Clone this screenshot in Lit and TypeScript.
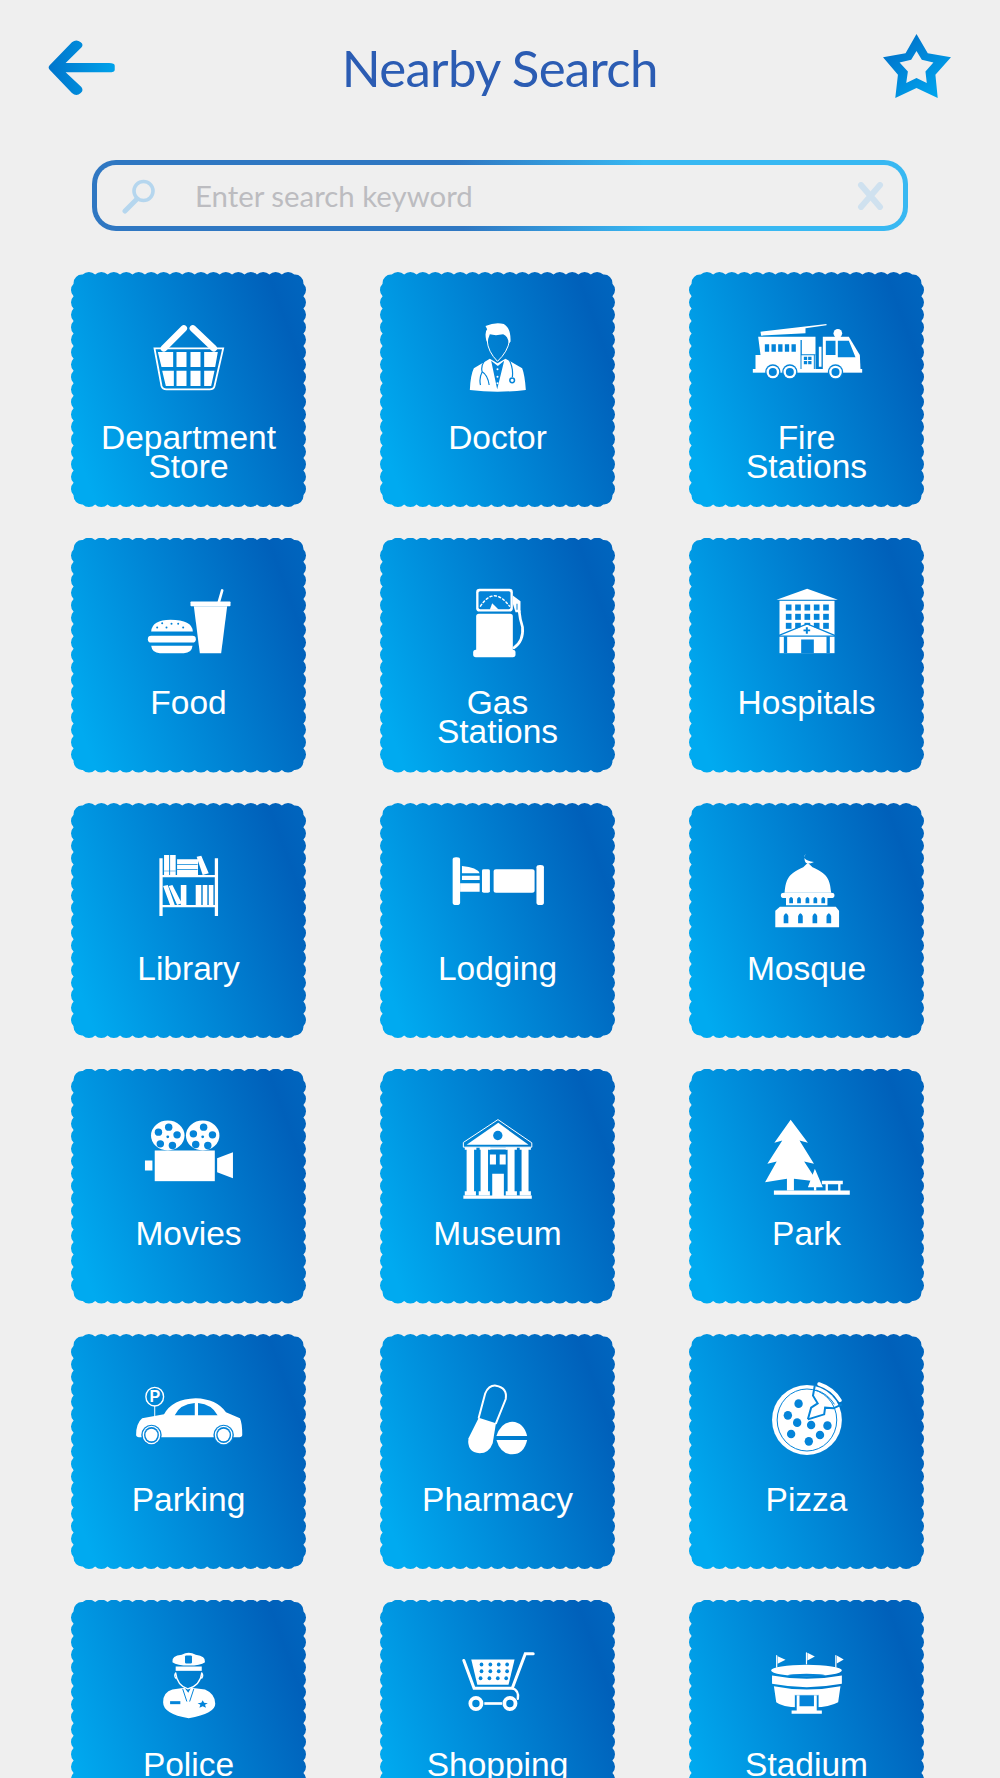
import { LitElement, css, html, svg, unsafeCSS } from "lit";
import { customElement } from "lit/decorators.js";

// scalloped edge of a 235px tile
function scallopPath() {
  const S = 235, d = 2.6, c = 11.7, n = 17;
  const step = (S - 2 * c) / n;
  const r = 8.74, rc = 8.5;
  let p = `M${c} ${d}`;
  for (let i = 1; i <= n; i++) p += ` A${r} ${r} 0 0 1 ${(c + i * step).toFixed(2)} ${d}`;
  p += ` A${rc} ${rc} 0 0 1 ${S - d} ${c}`;
  for (let i = 1; i <= n; i++) p += ` A${r} ${r} 0 0 1 ${S - d} ${(c + i * step).toFixed(2)}`;
  p += ` A${rc} ${rc} 0 0 1 ${S - c} ${S - d}`;
  for (let i = 1; i <= n; i++) p += ` A${r} ${r} 0 0 1 ${(S - c - i * step).toFixed(2)} ${S - d}`;
  p += ` A${rc} ${rc} 0 0 1 ${d} ${S - c}`;
  for (let i = 1; i <= n; i++) p += ` A${r} ${r} 0 0 1 ${d} ${(S - c - i * step).toFixed(2)}`;
  p += ` A${rc} ${rc} 0 0 1 ${c} ${d} Z`;
  return p;
}

const W3 = "390 228";
const W2 = "279.2 228";

const basket = svg`
  <path class="s" stroke-width="6.5" d="M370 205L310 265M397 205L460 265"/>
  <path class="s" stroke-width="1.8" d="M282 265H488L462 378Q460 388 448 388H318Q306 388 303 378Z"/>
  <path class="f" d="M292 276H338V321H303ZM348 276H378V321H348ZM390 276H420V321H390ZM431 276H472L464 321H431ZM305 332H340V378H316ZM348 332H378V378H348ZM390 332H420V378H390ZM431 332H462L452 378H431Z"/>`;

const doctor = svg`
  <path class="f" d="M345 78Q375 65 400 72Q422 85 420 125L415 130Q412 108 398 103Q375 108 358 103Q352 115 352 130L347 120Q342 95 350 88Z"/>
  <path class="s" stroke-width="1" d="M350 122Q352 155 381 184Q412 155 417 122"/>
  <path class="f" d="M298 270Q300 225 310 205L358 176L381 190L405 176L455 205Q463 225 466 270Q380 280 298 270Z"/>
  <path class="h" d="M362 182L380 268L401 182L382 198Z"/>
  <circle class="f" cx="381" cy="208" r="3"/><circle class="f" cx="381" cy="230" r="3"/><circle class="f" cx="381" cy="250" r="3"/>
  <path class="hs" stroke-width="1.2" d="M343 180Q330 200 335 215Q325 235 330 255M335 215Q352 225 356 255M415 178Q430 205 425 235"/>
  <circle class="f" cx="425" cy="241" r="10"/><circle class="hs" cx="425" cy="241" r="7" stroke-width="1.5"/>`;

const fire = svg`
  <path class="f" d="M120 95L318 72V76L255 85V100L122 107Z"/>
  <path class="f" d="M113 110H285V208H105V165H120Z"/>
  <path class="h" d="M133 133h13v22h-13zM153 133h13v22h-13zM173 133h13v22h-13zM193 133h13v22h-13zM213 133h13v22h-13z"/>
  <path class="h" d="M240 120h4v45h-4zM240 163h45v3h-45zM240 165h3v45h-3zM280 165h3v45h-3z"/>
  <path class="h" d="M250 170h10v10h-10zM263 170h10v10h-10zM250 183h10v10h-10zM263 183h10v10h-10z"/>
  <path class="f" d="M295 140h8v60h-8z"/>
  <circle class="f" cx="352" cy="100" r="13"/>
  <path class="f" d="M307 110H385L418 165L420 208H307Z"/>
  <path class="h" d="M316 122H345V165H316ZM352 122H385L405 172H352Z"/>
  <rect class="f" x="97" y="207" width="328" height="11"/>
  ${[157, 208, 345].map((x) => svg`<circle class="h" cx=${x} cy="216" r="23"/><circle class="f" cx=${x} cy="216" r="19"/><circle class="h" cx=${x} cy="216" r="12"/>`)}`;

const food = svg`
  <rect class="f" x="210" y="93" width="120" height="14" rx="2"/>
  <path class="f" d="M220 107H320L302 248H238Z"/>
  <path class="s" stroke-width="2.7" d="M305 60L295 95"/>
  <path class="f" d="M92 183Q95 148 150 148Q215 148 217 183Z"/>
  ${[[125, 158], [153, 160], [173, 160], [110, 171], [138, 171], [188, 171]].map(([x, y]) => svg`<circle class="h" cx=${x} cy=${y} r="3"/>`)}
  <rect class="f" x="82" y="196" width="144" height="20" rx="10"/>
  <path class="f" d="M92 226H216Q214 248 190 248H118Q95 248 92 226Z"/>`;

const gas = svg`
  <rect class="f" x="137" y="55" width="110" height="68" rx="10"/>
  <rect class="h" x="144" y="62" width="96" height="54" rx="5"/>
  <path class="s" stroke-width="1.5" stroke-dasharray="2 2.5" d="M150 107Q190 45 237 107"/>
  <path class="f" d="M178 118L185 98L205 118Z"/>
  <rect class="f" x="137" y="130" width="110" height="115" rx="8"/>
  <rect class="f" x="128" y="238" width="127" height="22" rx="8"/>
  <path class="s" stroke-width="2.7" d="M250 232Q280 212 276 170Q268 145 266 122"/>
  <path class="f" d="M247 75L270 92V125H255L247 100Z"/>
  <path class="h" d="M258 100h3v18h-3z"/>`;

const hospital = svg`
  <path class="f" d="M1130 55L1222 88H1038Z"/>
  <rect class="f" x="1047" y="91" width="165" height="157"/>
  ${[102, 130, 157].map((y) => [1066, 1094, 1122, 1150, 1178].map((x) => svg`<rect class="h" x=${x} y=${y} width="17" height="18"/>`))}
  <path class="f" d="M1130 162L1212 194H1048Z"/>
  <path class="hs" stroke-width="1.2" d="M1042 196L1130 160L1216 196"/>
  <path class="hs" stroke-width="1.2" d="M1044 197H1214"/>
  <path class="h" d="M1126 170h6v7h7v5h-7v8h-6v-8h-7v-5h7z"/>
  <path class="h" d="M1112 207H1150V248H1112ZM1060 197h10v51h-10zM1188 197h10v51h-10z"/>`;

const library = svg`
  <path class="f" d="M62 55h7v173h-7zM181 55h7v173h-7zM62 105h126v7H62zM62 195h126v7H62z"/>
  <path class="f" d="M72 45h11v60H72zM85 45h12v60H85zM100 58h45v47h-45zM142 50l10-3 16 53-13 5z"/>
  <path class="h" d="M100 72h44v2h-44zM100 87h44v2h-44zM72 92h25v2H72z"/>
  <path class="f" d="M70 138l10-3 15 60H85zM82 138l8-3 20 55-10 5zM108 135h12v60h-12zM140 135h12v60h-12zM155 135h10v60h-10zM168 135h10v60h-10z"/>`;

const lodging = svg`
  <rect class="f" x="692" y="52" width="16" height="143" rx="7"/>
  <rect class="f" x="872" y="75" width="16" height="120" rx="7"/>
  <path class="f" d="M712 78Q745 82 750 100H712ZM712 107H750V120H712ZM708 130H750V155H708Z"/>
  <rect class="f" x="755" y="88" width="17" height="70" rx="4"/>
  <rect class="f" x="780" y="88" width="88" height="70" rx="5"/>`;

const mosque = svg`
  <path class="f" d="M1450 42Q1440 60 1468 66Q1450 78 1448 60Q1447 48 1450 42Z"/>
  <path class="f" d="M1405 158C1408 118 1412 102 1445 82L1455 68L1465 82C1498 102 1502 118 1505 158Z"/>
  <rect class="f" x="1397" y="158" width="115" height="16" rx="7"/>
  <path class="f" d="M1408 172H1497V196H1408Z"/>
  ${[1415, 1432, 1450, 1467, 1484].map((x) => svg`<path class="h" d=${`M${x} 190V176Q${x + 4} 166 ${x + 8} 176V190Z`}/>`)}
  <path class="f" d="M1385 212L1395 200H1515L1522 212V262H1385Z"/>
  ${[1403, 1434, 1465, 1495].map((x) => svg`<path class="h" d=${`M${x} 250V228Q${x + 5} 212 ${x + 10} 228V250Z`}/>`)}`;

const reel = (cx: number, dots: number[][]) => svg`
  <ellipse class="f" cx=${cx} cy="90" rx="36" ry="45"/>
  ${dots.map(([x, y]) => svg`<ellipse class="h" cx=${x} cy=${y} rx="8" ry="11"/>`)}
  <ellipse class="h" cx=${cx} cy="94" rx="3" ry="4"/>`;

const movies = svg`
  ${reel(80, [[82, 65], [60, 80], [100, 88], [64, 115], [90, 120]])}
  ${reel(155, [[157, 65], [135, 85], [176, 88], [140, 117], [166, 120]])}
  <rect class="f" x="52" y="135" width="129" height="92"/>
  <rect class="f" x="31" y="165" width="16" height="30"/>
  <path class="f" d="M186 158L220 140V218L186 200Z"/>`;

const museum = svg`
  <path class="s" stroke-width="1" d="M790 43L862 112V125H715V112Z"/>
  <path class="f" d="M790 52L855 118H722Z"/>
  <ellipse class="h" cx="789" cy="90" rx="10" ry="14"/>
  <path class="f" d="M718 125h25v8h-5v124h4v13h-24v-13h4V133h-4zM750 125h23v8h-5v124h4v13h-24v-13h4V133h-2zM806 125h24v8h-5v124h5v13h-24v-13h4V133h-4zM836 125h24v8h-5v124h5v13h-24v-13h4V133h-4z"/>
  <path class="f" d="M770 127h38v5h-38zM772 147h13v30h-13zM793 147h13v30h-13zM777 205h25v65h-25zM715 270h147v10H715z"/>`;

const park = svg`
  <path class="f" d="M1418 43L1455 112L1437 105L1468 175L1447 168L1475 228L1425 220V255H1410V220L1363 230L1388 168L1368 175L1400 105L1383 112Z"/>
  <path class="f" d="M1470 190L1487 245H1473V255H1468V245H1455Z"/>
  <path class="f" d="M1382 255H1545V268H1382ZM1485 226H1530V236H1485ZM1493 236h5v19h-5zM1520 236h5v19h-5z"/>`;

const parking = svg`
  <ellipse class="s" stroke-width="1.4" cx="52" cy="65" rx="19" ry="28"/>
  <text class="pin" transform="translate(52 81) scale(0.86 1.2)" text-anchor="middle">P</text>
  <path class="s" stroke-width="1" d="M52 93V125"/>
  <path class="f" d="M12 180Q12 145 25 130L72 118Q90 72 140 70Q185 72 205 112L235 130Q240 145 240 180Q240 187 230 187H22Q12 187 12 180Z"/>
  <path class="h" d="M95 121Q105 88 138 84V121ZM145 84Q175 88 187 121H145Z"/>
  ${[45, 200].map((x) => svg`
    <ellipse class="h" cx=${x} cy="180" rx="22" ry="31"/>
    <ellipse class="f" cx=${x} cy="180" rx="19" ry="28"/>
    <ellipse class="h" cx=${x} cy="180" rx="16" ry="24"/>
    <ellipse class="f" cx=${x} cy="180" rx="13" ry="19"/>`)}`;

const pharmacy = svg`
  <path class="f" d="M748 128L785 145L778 205Q770 235 750 235Q722 232 726 190Z"/>
  <path class="s" stroke-width="2" d="M748 128L762 55Q770 30 785 32Q810 38 806 72L785 145"/>
  <path class="f" d="M786 183Q795 142 820 140Q845 142 852 183Z"/>
  <path class="f" d="M786 195H852Q845 238 820 238Q795 238 786 195Z"/>`;

const pizza = svg`
  <ellipse class="f" cx="1453" cy="135" rx="75" ry="105"/>
  <ellipse class="hs" stroke-width="1" cx="1453" cy="135" rx="64" ry="93"/>
  ${[[1435, 86], [1412, 121], [1432, 143], [1462, 150], [1497, 152], [1419, 177], [1481, 180], [1457, 199]].map(([x, y]) => svg`<ellipse class="h" cx=${x} cy=${y} rx="9" ry="13"/>`)}
  <path class="hs" stroke-width="2" d="M1455 133L1462 98L1476 85L1466 62L1470 30M1455 133L1490 118L1492 98L1510 100L1528 88"/>
  <path class="hs" stroke-width="1" d="M1472 45Q1498 56 1512 88"/>
  <path class="s" stroke-width="3.6" d="M1479 27Q1508 40 1524 76"/>`;

const police = svg`
  <path class="f" d="M90 80Q88 60 110 58Q125 45 140 58Q162 62 160 80Q150 90 125 90Q100 90 90 80Z"/>
  <rect class="h" x="117" y="60" width="15" height="24" rx="3"/>
  <rect class="f" x="97" y="93" width="56" height="13"/>
  <path class="s" stroke-width="1.3" d="M97 112Q100 150 123 160Q150 150 153 112M97 112Q93 120 97 128M153 112Q157 120 153 128"/>
  <path class="f" d="M70 200Q70 170 90 162L116 157L124 172L130 157L160 162Q182 175 182 205Q182 235 125 248Q70 235 70 200Z"/>
  <path class="hs" stroke-width="1" d="M112 160L121 198M136 160L127 198"/>
  <rect class="h" x="85" y="197" width="22" height="9"/>
  <path class="h" d="M155 194L158 202L166 203L160 208L162 217L155 212L148 217L150 208L144 203L152 202Z"/>`;

const shopping = svg`
  <path class="s" stroke-width="3" d="M865 55H848L820 158H738L716 75"/>
  <path class="f" d="M732 72H825L812 148H745Z"/>
  ${[87, 107, 128].map((y) => [756, 775, 793, 811].map((x) => svg`<ellipse class="h" cx=${y === 128 ? x - 4 : x - 2} cy=${y} rx="4" ry="6"/>`))}
  <path class="s" stroke-width="2.4" d="M820 158Q835 165 832 190"/>
  <ellipse class="s" stroke-width="3.8" cx="742" cy="204" rx="12" ry="17"/>
  <ellipse class="s" stroke-width="3.8" cx="815" cy="204" rx="12" ry="17"/>
  <rect class="f" x="760" y="200" width="38" height="8"/>`;

const stadium = svg`
  <path class="s" stroke-width="1.2" d="M1388 60V95M1452 52V85M1515 60V95"/>
  <path class="f" d="M1390 62L1407 73L1390 85ZM1454 52L1470 63L1454 75ZM1517 60L1532 72L1517 84Z"/>
  <ellipse class="f" cx="1452" cy="105" rx="76" ry="17"/>
  <ellipse class="h" cx="1452" cy="119" rx="40" ry="4"/>
  <path class="f" d="M1378 120Q1452 140 1528 120V145Q1452 165 1378 145Z"/>
  <path class="f" d="M1382 152Q1452 172 1525 152L1520 200Q1500 215 1470 215H1435Q1400 215 1387 200Z"/>
  <path class="h" d="M1427 178H1478V226H1427Z"/>
  <path class="f" d="M1431 180h6v46h-6zM1468 180h6v46h-6zM1427 176h51v3h-51zM1437 212h31v14h-31zM1420 225h65v10h-65z"/>`;

const categories = [
  { lines: ["Department", "Store"], vb: `190.5 180 ${W3}`, icon: basket },
  { lines: ["Doctor"], vb: `187.5 60 ${W3}`, icon: doctor },
  { lines: ["Fire", "Stations"], vb: `64.5 60 ${W3}`, icon: fire },
  { lines: ["Food"], vb: `10.5 46.5 ${W3}`, icon: food },
  { lines: ["Gas", "Stations"], vb: `7.5 46.5 ${W3}`, icon: gas },
  { lines: ["Hospitals"], vb: `934.5 46.5 ${W3}`, icon: hospital },
  { lines: ["Library"], vb: `-14 33 ${W2}`, icon: library },
  { lines: ["Lodging"], vb: `649.8 33 ${W2}`, icon: lodging },
  { lines: ["Mosque"], vb: `1313.5 33 ${W2}`, icon: mosque },
  { lines: ["Movies"], vb: `-14 34.5 ${W2}`, icon: movies },
  { lines: ["Museum"], vb: `649.8 34.5 ${W2}`, icon: museum },
  { lines: ["Park"], vb: `1313.5 34.5 ${W2}`, icon: park },
  { lines: ["Parking"], vb: `-14 21 ${W2}`, icon: parking },
  { lines: ["Pharmacy"], vb: `649.8 21 ${W2}`, icon: pharmacy },
  { lines: ["Pizza"], vb: `1313.5 21 ${W2}`, icon: pizza },
  { lines: ["Police"], vb: `-14 37.5 ${W2}`, icon: police },
  { lines: ["Shopping"], vb: `649.8 37.5 ${W2}`, icon: shopping },
  { lines: ["Stadium"], vb: `1313.5 37.5 ${W2}`, icon: stadium },
];

@customElement("app-root")
export class AppRoot extends LitElement {
  static styles = css`
    :host {
      display: block;
      height: 1778px;
      overflow: hidden;
      background: #efefef;
    }

    .header {
      display: flex;
      justify-content: space-between;
      align-items: center;
      height: 64px;
      padding: 34px 48.5px 0 48px;
    }

    .back {
      width: 68px;
      height: 56px;
      margin-top: 3px;
    }

    .star {
      width: 68px;
      height: 64px;
    }

    .title {
      margin-top: 4px;
      font-family: Lato, "Open Sans", sans-serif;
      font-size: 51px;
      line-height: 64px;
      color: #2b5cb3;
      letter-spacing: -0.7px;
    }

    .search {
      display: flex;
      align-items: center;
      box-sizing: border-box;
      height: 71px;
      margin: 62px 92px 0;
      padding: 0 18px 0 24px;
      border: 5px solid transparent;
      border-radius: 24px;
      background:
        linear-gradient(#efefef, #efefef) padding-box,
        linear-gradient(82deg, #2f77c2 0%, #2f77c2 45%, #38b8f2 68%, #38b8f2 100%) border-box;
    }

    .lens {
      width: 36px;
      height: 36px;
      flex: none;
    }

    .search input {
      flex: 1;
      min-width: 0;
      margin-left: 38px;
      padding: 0;
      border: none;
      outline: none;
      background: none;
      font-family: Lato, "Open Sans", sans-serif;
      font-size: 29.4px;
      color: #bcbcc0;
    }

    .search input::placeholder {
      color: #bcbcc0;
      opacity: 1;
    }

    .clear {
      width: 29px;
      height: 28px;
      flex: none;
    }

    .grid {
      display: grid;
      grid-template-columns: repeat(3, 235px);
      column-gap: 74px;
      row-gap: 30.5px;
      margin-top: 41px;
      padding-left: 71px;
    }

    .tile {
      --hole: #0484d9;
      height: 235px;
      padding-top: 48px;
      box-sizing: border-box;
      background: linear-gradient(70deg, #00aaf0 8%, #0060ba 88%, #0066bf 100%);
      clip-path: path("${unsafeCSS(scallopPath())}");
      text-align: center;
    }

    .ico {
      display: block;
      width: 130px;
      height: 76px;
      margin: 0 auto;
      overflow: visible;
    }

    .ico * {
      vector-effect: non-scaling-stroke;
    }

    .f {
      fill: #fff;
    }

    .h {
      fill: var(--hole);
    }

    .s {
      fill: none;
      stroke: #fff;
      stroke-linecap: round;
    }

    .hs {
      fill: none;
      stroke: var(--hole);
    }

    .pin {
      font-family: "Liberation Sans", sans-serif;
      font-size: 40px;
      font-weight: 700;
      fill: #fff;
    }

    .label {
      margin-top: 26.5px;
      font-family: "Liberation Sans", Arial, sans-serif;
      font-size: 33.5px;
      line-height: 29px;
      color: #fff;
    }
  `;

  render() {
    return html`
      <div class="header">
        <svg class="back" viewBox="75 117 108 170" preserveAspectRatio="none">
          <defs>
            <linearGradient id="backFill" x1="0" x2="1" y1="0" y2="0">
              <stop offset="0" stop-color="#0075cc" />
              <stop offset="1" stop-color="#00a2ea" />
            </linearGradient>
          </defs>
          <path
            fill="url(#backFill)"
            d="M78 193L113 124Q120 113 127 124Q132 130 128 140L103 187H172Q181 187 181 195V207Q181 215 172 215H103L128 260Q132 270 127 278Q120 290 113 278L78 208Q74 200 78 193Z"
          />
        </svg>
        <div class="title">Nearby Search</div>
        <svg class="star" viewBox="70 27 205 193">
          <defs>
            <linearGradient id="starFill" x1="0.1" x2="0.85" y1="0.1" y2="1">
              <stop offset="0" stop-color="#006fc8" />
              <stop offset="1" stop-color="#00a8f0" />
            </linearGradient>
          </defs>
          <path
            fill="url(#starFill)"
            fill-rule="evenodd"
            d="M171 27L205 85L275 97L228 150L235 220L171 190L107 220L115 150L70 97L138 85ZM171 78L155 105L120 113L145 140L140 175L171 160L202 175L198 140L222 113L187 105Z"
          />
        </svg>
      </div>

      <div class="search">
        <svg class="lens" viewBox="0 0 36 36">
          <circle cx="22.5" cy="13" r="9.5" fill="none" stroke="#b5d6ee" stroke-width="3.6" />
          <path d="M16 21L4 33" stroke="#b5d6ee" stroke-width="5" stroke-linecap="round" />
        </svg>
        <input placeholder="Enter search keyword" />
        <svg class="clear" viewBox="0 0 29 28">
          <path d="M5 3L24 25M24 3L5 25" stroke="#cfe1ef" stroke-width="6" stroke-linecap="round" />
        </svg>
      </div>

      <div class="grid">
        ${categories.map(
          (c) => html`
            <div class="tile">
              <svg class="ico" viewBox=${c.vb} preserveAspectRatio="none">${c.icon}</svg>
              <div class="label">${c.lines.map((l) => html`<div>${l}</div>`)}</div>
            </div>
          `
        )}
      </div>
    `;
  }
}
